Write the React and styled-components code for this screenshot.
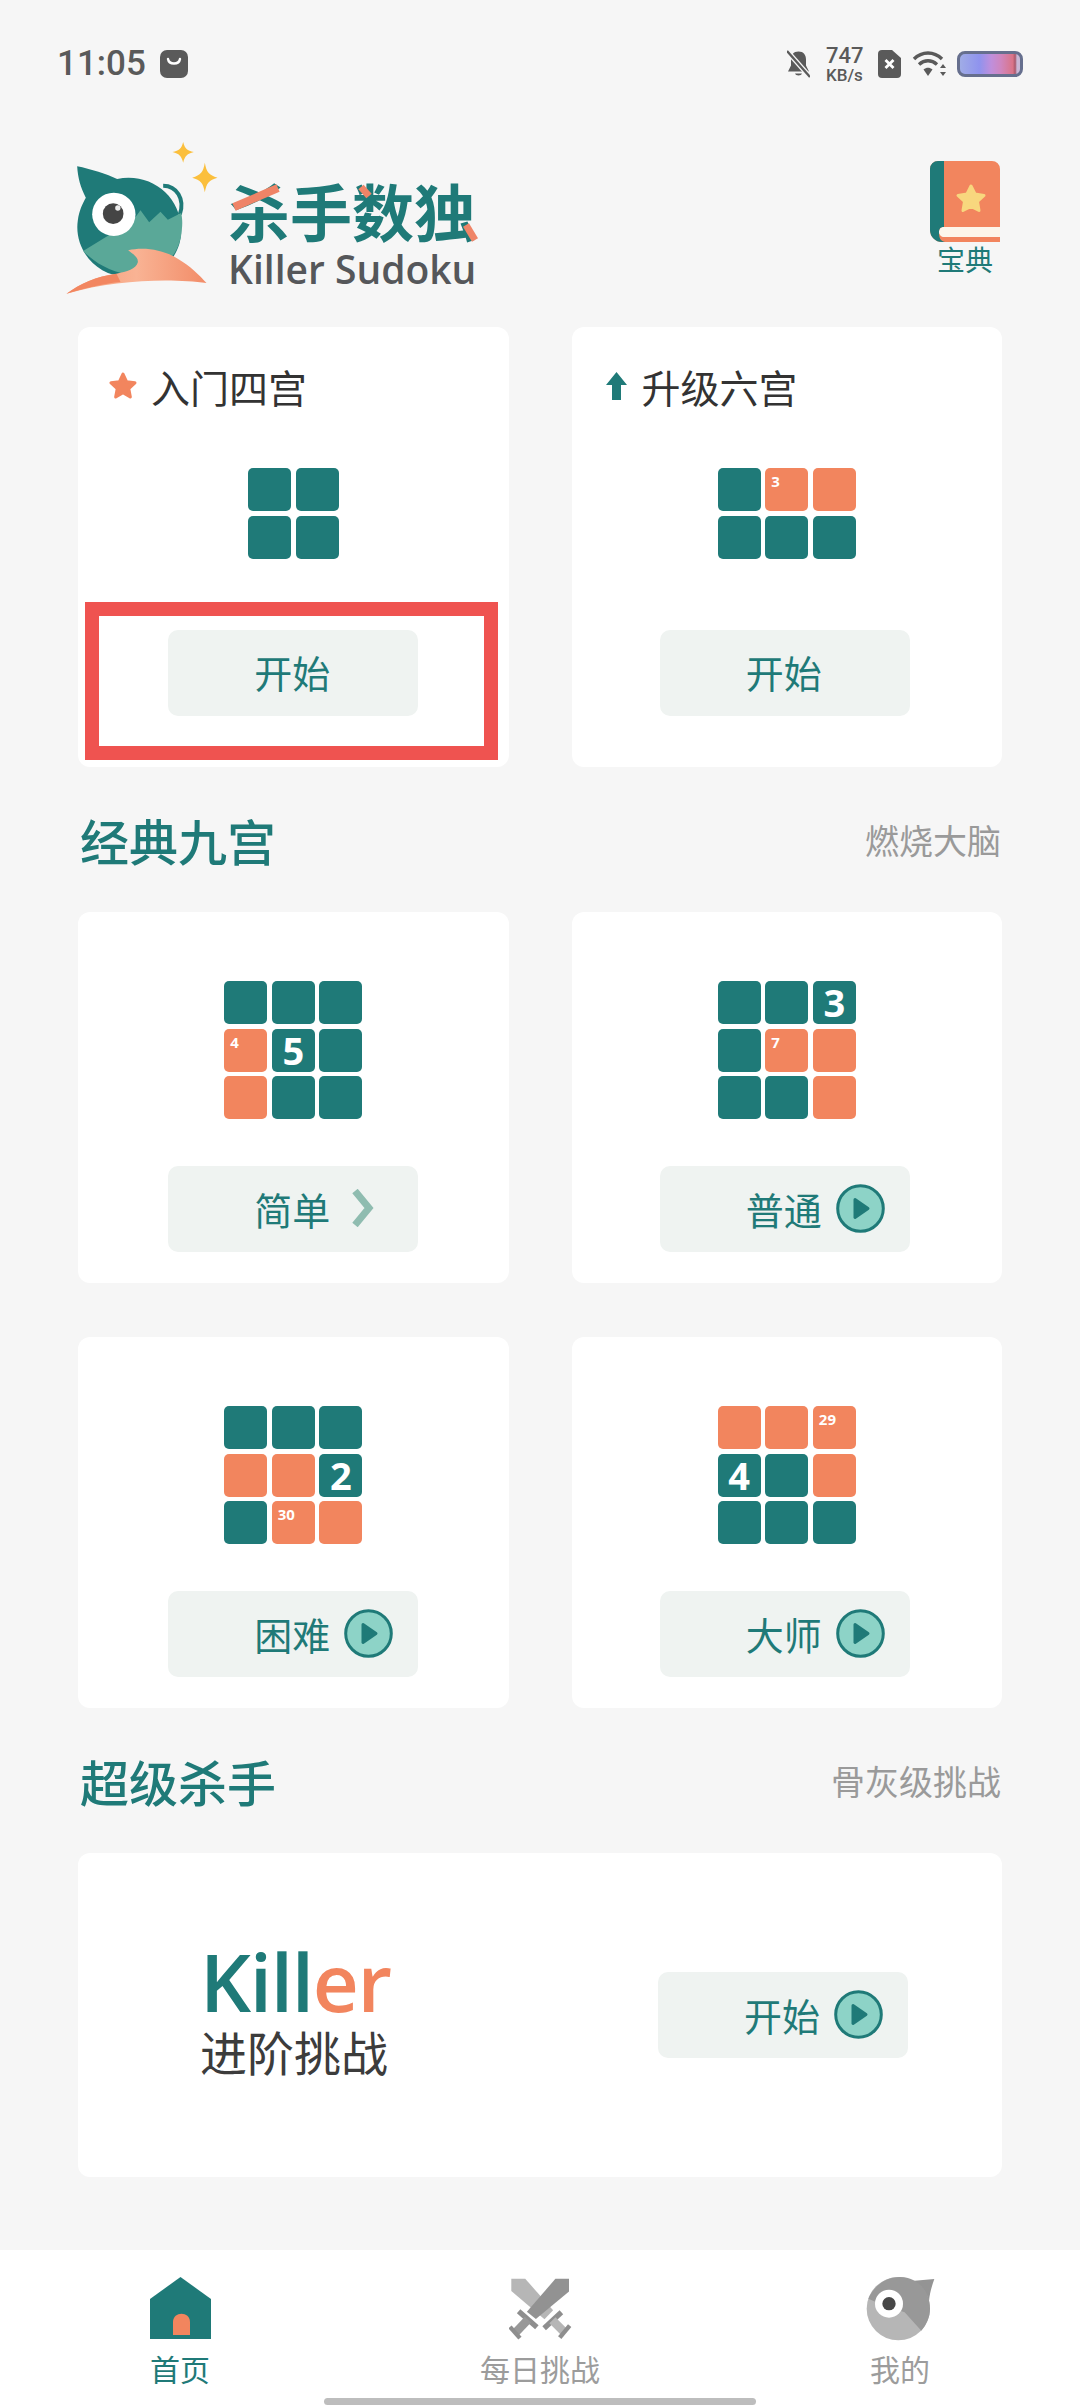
import React from "react";
import styled, { createGlobalStyle } from "styled-components";

const TEAL = "#1f7a78";
const ORANGE = "#f2855e";
const CJK = `"Noto Sans CJK SC", "Noto Sans", sans-serif`;

const GlobalStyle = createGlobalStyle`
  html, body {
    margin: 0;
    padding: 0;
    background: #f6f6f6;
  }
  * {
    box-sizing: border-box;
  }
`;

const Page = styled.div`
  width: 1080px;
  height: 2408px;
  display: flex;
  flex-direction: column;
  position: relative;
  overflow: hidden;
  background: #f6f6f6;
  font-family: ${CJK};
`;

const StatusBar = styled.div`
  height: 100px;
  padding: 50px 57px 0;
  display: flex;
  justify-content: space-between;
  align-items: flex-start;
  color: #5a5a5a;
`;

const StatusGroup = styled.div`
  display: flex;
  align-items: flex-start;
  gap: ${(p) => p.$gap}px;
`;

const Clock = styled.div`
  font-family: Roboto, sans-serif;
  font-weight: 500;
  font-size: 35px;
  line-height: 28px;
  width: 88px;
`;

const Speed = styled.div`
  margin: -4px 4px 0 5px;
  display: flex;
  flex-direction: column;
  font-family: Roboto, sans-serif;
  font-weight: 500;
  width: 37px;
`;

const SpeedValue = styled.span`
  font-size: 22px;
  line-height: 20px;
`;

const SpeedUnit = styled.span`
  font-size: 17px;
  line-height: 19px;
  white-space: nowrap;
`;

const Battery = styled.div`
  width: 66px;
  height: 26px;
  margin-top: 1px;
  border: 3px solid #666f8e;
  border-radius: 8px;
  background: linear-gradient(90deg, #a0ace6 0%, #8f93ee 32%, #bf8fdc 52%, #cf86bf 68%, #da7488 88%, #a8586c 92%, #c9b8d6 95%);
`;

const Header = styled.div`
  height: 227px;
  padding: 37px 79px 0 63px;
  display: flex;
  align-items: flex-start;
`;

const Logo = styled.div`
  display: flex;
  align-items: flex-start;
  gap: 8px;
  flex: 1;
`;

const LogoText = styled.div`
  display: flex;
  flex-direction: column;
  padding-top: 37px;
`;

const LogoTitle = styled.div`
  position: relative;
  width: 250px;
  margin-bottom: 3px;
  font-size: 62px;
  font-weight: 700;
  line-height: 72px;
  color: ${TEAL};
  white-space: nowrap;
`;

const LogoSlashes = styled.svg`
  position: absolute;
  left: 0;
  top: 9px;
`;

const LogoSub = styled.div`
  font-family: "Open Sans", sans-serif;
  font-size: 39px;
  font-weight: 600;
  line-height: 40px;
  color: #55575a;
  white-space: nowrap;
`;

const Guide = styled.div`
  margin-top: 24px;
  display: flex;
  flex-direction: column;
  align-items: center;
  color: ${TEAL};
  font-size: 28px;
  line-height: 34px;
`;

const StartButton = styled.button`
  width: 250px;
  height: 86px;
  padding: 0 0 2px 86px;
  border: none;
  border-radius: 10px;
  background: #eff3f1;
  color: ${TEAL};
  display: flex;
  align-items: center;
  font-family: ${CJK};
  font-size: 38px;
  white-space: nowrap;
`;

const CardRow = styled.div`
  padding: 0 78px;
  display: grid;
  grid-template-columns: repeat(2, 1fr);
  gap: 54px 63px;
`;

const Card = styled.div`
  position: relative;
  background: #fff;
  border-radius: 12px;
  display: flex;
  flex-direction: column;
  align-items: center;

  &:nth-child(even) ${StartButton} {
    margin-left: -4px;
  }
`;

const IntroCard = styled(Card)`
  height: 440px;
  padding-top: 36px;
`;

const LevelCard = styled(Card)`
  height: 371px;
  padding-top: 69px;
`;

const CardTitle = styled.div`
  align-self: flex-start;
  height: 46px;
  padding-left: ${(p) => p.$left}px;
  display: flex;
  align-items: center;
  gap: ${(p) => p.$gap}px;
  font-size: 39px;
  line-height: 46px;
  color: #333;
`;

const MiniGrid = styled.div`
  display: grid;
  grid-template-columns: repeat(${(p) => p.$cols}, 43px);
  grid-auto-rows: 43px;
  gap: 4.6px;
`;

const IntroGrid = styled(MiniGrid)`
  margin: 59px 0 71px;
`;

const LevelGrid = styled(MiniGrid)`
  margin-bottom: 47px;
`;

const Cell = styled.div`
  border-radius: 5px;
  background: ${(p) => (p.$tone === "o" ? ORANGE : TEAL)};
  color: #fff;
  font-family: "Open Sans", sans-serif;
  font-weight: 700;
`;

const BigCell = styled(Cell)`
  display: flex;
  align-items: center;
  justify-content: center;
  font-size: 38px;
  line-height: 43px;
`;

const SmallCell = styled(Cell)`
  padding: 4px 0 0 6px;
  font-size: 15px;
  line-height: 18px;
`;

const ButtonIcon = styled.svg`
  flex: none;
  margin-left: ${(p) => p.$left}px;
`;

const MarkedBox = styled.div`
  position: absolute;
  left: 7px;
  top: 275px;
  width: 413px;
  height: 158px;
  border: 14px solid #ef5350;
`;

const SectionHead = styled.div`
  height: 145px;
  padding: 0 79px 0 80px;
  display: flex;
  justify-content: space-between;
  align-items: center;
`;

const SectionTitle = styled.div`
  font-size: 49px;
  font-weight: 500;
  color: ${TEAL};
`;

const SectionNote = styled.div`
  font-size: 34px;
  color: #9a9a9a;
`;

const SuperCard = styled.div`
  margin: 0 78px;
  height: 324px;
  padding: 0 94px 0 122px;
  background: #fff;
  border-radius: 12px;
  display: flex;
  justify-content: space-between;
  align-items: center;
`;

const SuperText = styled.div`
  display: flex;
  flex-direction: column;
  padding-bottom: 4px;
`;

const KillerWord = styled.div`
  margin-bottom: 5px;
  font-family: "Open Sans", sans-serif;
  font-size: 80px;
  font-weight: 600;
  line-height: 70px;
  letter-spacing: -1.3px;
  color: ${TEAL};
`;

const KillerEnd = styled.span`
  color: ${ORANGE};
`;

const SuperLabel = styled.div`
  font-size: 47px;
  line-height: 60px;
  color: #3c3c3c;
  white-space: nowrap;
`;

const BottomNav = styled.div`
  margin-top: auto;
  height: 158px;
  padding-top: 27px;
  background: #fff;
  display: grid;
  grid-template-columns: repeat(3, 1fr);
`;

const NavItem = styled.div`
  display: flex;
  flex-direction: column;
  align-items: center;
  color: ${(p) => (p.$active ? TEAL : "#9c9c9c")};
  font-size: 30px;
  line-height: 40px;
`;

const NavIcon = styled.div`
  height: 71px;
`;

const NavGlyph = styled.svg`
  display: block;
`;

const HomeBar = styled.div`
  position: absolute;
  left: 324px;
  bottom: 3px;
  width: 432px;
  height: 7px;
  border-radius: 4px;
  background: #bdbdbd;
`;

const SleepIcon = () => (
  <svg width="28" height="28" viewBox="0 0 28 28">
    <rect width="28" height="28" rx="7" fill="#5a5a5a" />
    <path d="M8 9c1 6 11 6 12 0" fill="none" stroke="#fff" strokeWidth="2.4" strokeLinecap="round" />
  </svg>
);

const BellOffIcon = () => (
  <svg width="23" height="28" viewBox="0 0 23 28">
    <path d="M11.5 1.5c-5 0-7.5 3.5-7.5 8v6L1 21.5h21l-3-6v-6c0-4.5-2.5-8-7.5-8z" fill="#5a5a5a" />
    <path d="M8 23.5c.5 2.5 6.500 2.500 7 0z" fill="#5a5a5a" />
    <path d="M0 1l23 26" stroke="#f6f6f6" strokeWidth="5" />
    <path d="M0 1l23 26" stroke="#5a5a5a" strokeWidth="2.4" />
  </svg>
);

const SimOffIcon = () => (
  <svg width="23" height="28" viewBox="0 0 23 28">
    <path d="M4 0h10l9 8v16a4 4 0 0 1-4 4H4a4 4 0 0 1-4-4V4a4 4 0 0 1 4-4z" fill="#5a5a5a" />
    <path d="M7.5 10l8 8M15.5 10l-8 8" stroke="#fff" strokeWidth="2.8" />
  </svg>
);

const WifiIcon = () => (
  <svg width="34" height="27" viewBox="0 0 34 27">
    <path d="M2 9c8-8 20-8 28 0" fill="none" stroke="#5a5a5a" strokeWidth="3.4" />
    <path d="M7 14.5c5.5-5 12.5-5 18 0" fill="none" stroke="#5a5a5a" strokeWidth="3.4" />
    <path d="M11.5 19.5c3-2.5 6-2.5 9 0L16 26z" fill="#5a5a5a" />
    <path d="M31 14l3 4h-6zM31 26l3-4h-6z" fill="#5a5a5a" />
  </svg>
);

const LogoMark = () => (
  <svg width="157" height="160" viewBox="40 20 470 480">
    <defs>
      <linearGradient id="wing" x1="0" x2="1" y1="0" y2="0">
        <stop offset="0" stopColor="#f59a76" />
        <stop offset="0.5" stopColor="#f9b394" />
        <stop offset="1" stopColor="#f28c68" />
      </linearGradient>
    </defs>
    <path d="M400 35c5 20 12 26 32 30-20 5-27 12-32 32-5-20-12-27-32-32 20-4 27-10 32-30z" fill="#fbbf3c" />
    <path d="M465 97c5 28 12 37 38 45-26 7-33 16-38 44-5-28-12-37-38-44 26-8 33-17 38-45z" fill="#fbbf3c" />
    <path d="M340 166c40 0 66 40 50 86" fill="none" stroke={TEAL} strokeWidth="12" />
    <path d="M82 108c40 8 90 24 120 38 100-20 190 50 192 150 2 90-70 150-160 145C130 436 72 350 84 270c4-30 14-50 24-68-16-30-24-60-26-94z" fill={TEAL} />
    <path d="M100 362l150-92 22-30 26 36 34-32 22 24 40-20c4 18 4 32 2 50-6 90-78 140-162 133-60-6-110-44-134-69z" fill="#5aa898" />
    <circle cx="192" cy="252" r="65" fill="#fff" />
    <circle cx="190" cy="250" r="31" fill="#454545" />
    <circle cx="204" cy="233" r="8" fill="#eee" />
    <path d="M235 360c50-12 110 0 150 26 35 20 65 50 85 72-100-14-270-12-420 32 40-30 90-52 150-60 30-6 60-14 64-34 2-16-14-24-29-36z" fill="url(#wing)" />
    <path d="M50 490c40-30 90-52 150-60l12 25c-60 6-110 20-162 35z" fill="#f28660" />
  </svg>
);

const BookIcon = () => (
  <svg width="72" height="81" viewBox="0 0 70 81">
    <path d="M8 0h54a8 8 0 0 1 8 8v58H14c-4 0-5 3-5 5s2 5 5 5h56v5H12a12 12 0 0 1-12-12V8a8 8 0 0 1 8-8z" fill={ORANGE} />
    <path d="M14 0H8a8 8 0 0 0-8 8v61a12 12 0 0 0 12 12h3c-5-1-6-5-6-9 0-4 1-6 5-6z" fill={TEAL} />
    <path d="M14 66h56v10H14c-6 0-6-10 0-10z" fill="#fdf6ea" />
    <path d="M41 25l4 8 9 1.5-6.5 6 1.5 9-8-4-8 4 1.5-9-6.5-6 9-1.5z" fill="#f8d77e" stroke="#f8d77e" strokeWidth="3" strokeLinejoin="round" />
  </svg>
);

const StarIcon = () => (
  <svg width="28" height="28" viewBox="0 0 27 27">
    <path d="M13.5 2l3.5 7.5 8 1-6 5.5 1.5 8-7-4-7 4 1.5-8-6-5.5 8-1z" fill={ORANGE} stroke={ORANGE} strokeWidth="3" strokeLinejoin="round" />
  </svg>
);

const ArrowUpIcon = () => (
  <svg width="21" height="28" viewBox="0 0 21 28">
    <path d="M10.5 0L21 13h-6v15H6V13H0z" fill={TEAL} />
  </svg>
);

const PlayIcon = () => (
  <ButtonIcon $left={14} width="49" height="49" viewBox="0 0 49 49">
    <circle cx="24.5" cy="24.5" r="22.8" fill="#8dd3c7" stroke={TEAL} strokeWidth="3" />
    <path d="M19 15.5l13 9-13 9z" fill={TEAL} stroke={TEAL} strokeWidth="3" strokeLinejoin="round" />
  </ButtonIcon>
);

const ChevronIcon = () => (
  <ButtonIcon $left={21} width="23" height="38" viewBox="0 0 23 38">
    <path d="M4 2l14 17L4 36" fill="none" stroke="#8fbcb0" strokeWidth="7" />
  </ButtonIcon>
);

const HomeIcon = () => (
  <NavGlyph width="61" height="62" viewBox="0 0 61 62">
    <path d="M30.5 0L61 22v40H0V22z" fill={TEAL} />
    <path d="M23 58V45c0-11 17-11 17 0v13z" fill={ORANGE} />
  </NavGlyph>
);

const SwordsIcon = () => (
  <NavGlyph width="63" height="65" viewBox="55 40 190 195">
    <path d="M62 45h42l84 95-26 27L62 82z" fill="#b6b6b6" />
    <path d="M236 45v38L136 166l-27-22L195 45z" fill="#929292" />
    <path d="M84 143l55 48" stroke="#8e8e8e" strokeWidth="16" />
    <path d="M112 168L74 208" stroke="#989898" strokeWidth="26" />
    <path d="M58 190l30 34" stroke="#8e8e8e" strokeWidth="13" />
    <path d="M213 146l-52 48" stroke="#8e8e8e" strokeWidth="16" />
    <path d="M186 170l36 36" stroke="#b6b6b6" strokeWidth="26" />
    <path d="M238 186l-30 36" stroke="#8e8e8e" strokeWidth="13" />
  </NavGlyph>
);

const OwlIcon = () => (
  <NavGlyph width="70" height="65" viewBox="50 40 210 195">
    <path d="M190 52l68-6c-8 22-14 44-16 66z" fill="#949494" />
    <circle cx="150" cy="135" r="95" fill="#b6b6b6" />
    <path d="M60 105c18-42 56-65 95-65 52 0 90 42 90 95 0 24-10 46-26 66l-50-55-60-20z" fill="#989898" />
    <circle cx="122" cy="120" r="42" fill="#fff" />
    <circle cx="122" cy="120" r="20" fill="#474747" />
  </NavGlyph>
);

const LEVELS = [
  { name: "简单", cells: ["t", "t", "t", "o4", "t5", "t", "o", "t", "t"], icon: <ChevronIcon /> },
  { name: "普通", cells: ["t", "t", "t3", "t", "o7", "o", "t", "t", "o"], icon: <PlayIcon /> },
  { name: "困难", cells: ["t", "t", "t", "o", "o", "t2", "t", "o30", "o"], icon: <PlayIcon /> },
  { name: "大师", cells: ["o", "o", "o29", "t4", "t", "o", "t", "t", "t"], icon: <PlayIcon /> },
];

// first letter is the colour, the rest is the number shown in the cell
const renderCells = (cells) =>
  cells.map((spec, i) => {
    const tone = spec[0];
    const value = spec.slice(1);
    if (tone === "o") return <SmallCell key={i} $tone={tone}>{value}</SmallCell>;
    return <BigCell key={i} $tone={tone}>{value}</BigCell>;
  });

export default function App() {
  return (
    <Page>
      <GlobalStyle />
      <StatusBar>
        <StatusGroup $gap={15}>
          <Clock>11:05</Clock>
          <SleepIcon />
        </StatusGroup>
        <StatusGroup $gap={11}>
          <BellOffIcon />
          <Speed>
            <SpeedValue>747</SpeedValue>
            <SpeedUnit>KB/s</SpeedUnit>
          </Speed>
          <SimOffIcon />
          <WifiIcon />
          <Battery />
        </StatusGroup>
      </StatusBar>

      <Header>
        <Logo>
          <LogoMark />
          <LogoText>
            <LogoTitle>
              杀手数独
              <LogoSlashes width="250" height="64" viewBox="0 0 250 64">
                <path d="M6 24L50 5" stroke="#ef8467" strokeWidth="8" />
                <path d="M133 4l8 9" stroke="#ef8467" strokeWidth="7" />
                <path d="M238 42l9 15" stroke="#ef8467" strokeWidth="7" />
              </LogoSlashes>
            </LogoTitle>
            <LogoSub>Killer Sudoku</LogoSub>
          </LogoText>
        </Logo>
        <Guide>
          <BookIcon />
          宝典
        </Guide>
      </Header>

      <CardRow>
        <IntroCard>
          <CardTitle $left={31} $gap={14}>
            <StarIcon />
            入门四宫
          </CardTitle>
          <IntroGrid $cols={2}>{renderCells(["t", "t", "t", "t"])}</IntroGrid>
          <StartButton>开始</StartButton>
          <MarkedBox />
        </IntroCard>
        <IntroCard>
          <CardTitle $left={34} $gap={15}>
            <ArrowUpIcon />
            升级六宫
          </CardTitle>
          <IntroGrid $cols={3}>{renderCells(["t", "o3", "o", "t", "t", "t"])}</IntroGrid>
          <StartButton>开始</StartButton>
        </IntroCard>
      </CardRow>

      <SectionHead>
        <SectionTitle>经典九宫</SectionTitle>
        <SectionNote>燃烧大脑</SectionNote>
      </SectionHead>

      <CardRow>
        {LEVELS.map((level) => (
          <LevelCard key={level.name}>
            <LevelGrid $cols={3}>{renderCells(level.cells)}</LevelGrid>
            <StartButton>
              {level.name}
              {level.icon}
            </StartButton>
          </LevelCard>
        ))}
      </CardRow>

      <SectionHead>
        <SectionTitle>超级杀手</SectionTitle>
        <SectionNote>骨灰级挑战</SectionNote>
      </SectionHead>

      <SuperCard>
        <SuperText>
          <KillerWord>
            Kill<KillerEnd>er</KillerEnd>
          </KillerWord>
          <SuperLabel>进阶挑战</SuperLabel>
        </SuperText>
        <StartButton>
          开始
          <PlayIcon />
        </StartButton>
      </SuperCard>

      <BottomNav>
        <NavItem $active>
          <NavIcon>
            <HomeIcon />
          </NavIcon>
          首页
        </NavItem>
        <NavItem>
          <NavIcon>
            <SwordsIcon />
          </NavIcon>
          每日挑战
        </NavItem>
        <NavItem>
          <NavIcon>
            <OwlIcon />
          </NavIcon>
          我的
        </NavItem>
      </BottomNav>
      <HomeBar />
    </Page>
  );
}
